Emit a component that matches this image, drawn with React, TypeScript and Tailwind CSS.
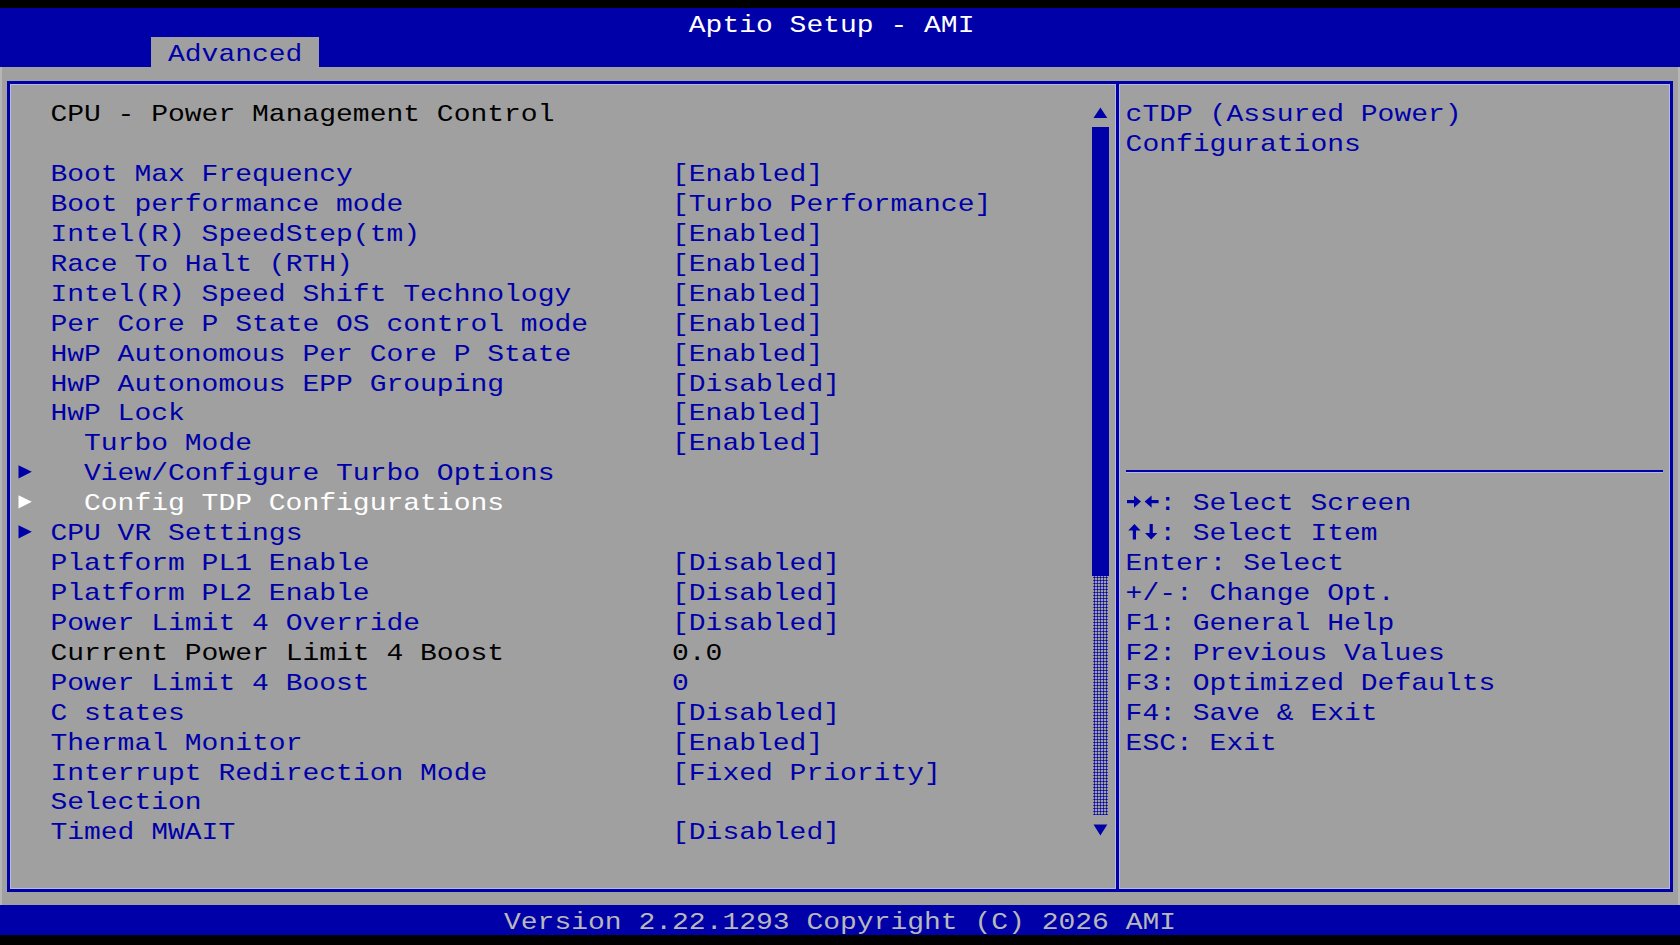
import React from "react";

type Item = {
  label: string;
  value?: string;
  arrow?: boolean;
  indent?: boolean;
  tone?: "blue" | "black" | "white";
};

const items: Item[] = [
  { label: "Boot Max Frequency", value: "[Enabled]" },
  { label: "Boot performance mode", value: "[Turbo Performance]" },
  { label: "Intel(R) SpeedStep(tm)", value: "[Enabled]" },
  { label: "Race To Halt (RTH)", value: "[Enabled]" },
  { label: "Intel(R) Speed Shift Technology", value: "[Enabled]" },
  { label: "Per Core P State OS control mode", value: "[Enabled]" },
  { label: "HwP Autonomous Per Core P State", value: "[Enabled]" },
  { label: "HwP Autonomous EPP Grouping", value: "[Disabled]" },
  { label: "HwP Lock", value: "[Enabled]" },
  { label: "Turbo Mode", value: "[Enabled]", indent: true },
  { label: "View/Configure Turbo Options", arrow: true, indent: true },
  { label: "Config TDP Configurations", arrow: true, indent: true, tone: "white" },
  { label: "CPU VR Settings", arrow: true },
  { label: "Platform PL1 Enable", value: "[Disabled]" },
  { label: "Platform PL2 Enable", value: "[Disabled]" },
  { label: "Power Limit 4 Override", value: "[Disabled]" },
  { label: "Current Power Limit 4 Boost", value: "0.0", tone: "black" },
  { label: "Power Limit 4 Boost", value: "0" },
  { label: "C states", value: "[Disabled]" },
  { label: "Thermal Monitor", value: "[Enabled]" },
  { label: "Interrupt Redirection Mode", value: "[Fixed Priority]" },
  { label: "Selection" },
  { label: "Timed MWAIT", value: "[Disabled]" },
];

const help: { key: string; text: string; icon?: "lr" | "ud" }[] = [
  { key: "→←", text: ": Select Screen", icon: "lr" },
  { key: "↑↓", text: ": Select Item", icon: "ud" },
  { key: "Enter", text: ": Select" },
  { key: "+/-", text: ": Change Opt." },
  { key: "F1", text: ": General Help" },
  { key: "F2", text: ": Previous Values" },
  { key: "F3", text: ": Optimized Defaults" },
  { key: "F4", text: ": Save & Exit" },
  { key: "ESC", text: ": Exit" },
];

// vertical squash so the glyphs get the wide, low BIOS proportions
const TX = "scale-y-[0.85] translate-y-[3px]";

function toneClass(t?: Item["tone"]) {
  if (t === "white") return "text-white";
  if (t === "black") return "text-black";
  return "text-[#0000a8]";
}

function RightArrow({ white }: { white?: boolean }) {
  return (
    <svg width="16.8" height="29.925" viewBox="0 0 16.8 29.925" className="block">
      <polygon points="1.5,9.2 14.8,15.8 1.5,22.4" fill={white ? "#ffffff" : "#0000a8"} />
    </svg>
  );
}

function KeyArrows({ kind }: { kind: "lr" | "ud" }) {
  return (
    <svg width="33.6" height="29.925" viewBox="0 0 33.6 29.925" className="block shrink-0">
      <title>{kind === "lr" ? "→←" : "↑↓"}</title>
      {kind === "lr" ? (
        <g fill="#0000a8">
          <rect x="1" y="14" width="8" height="3.2" />
          <polygon points="8,9.5 15,15.6 8,21.7" />
          <rect x="24.6" y="14" width="8" height="3.2" />
          <polygon points="25.6,9.5 18.6,15.6 25.6,21.7" />
        </g>
      ) : (
        <g fill="#0000a8">
          <polygon points="2.2,14.5 8.4,8 14.6,14.5" />
          <rect x="6.8" y="13.5" width="3.2" height="10" />
          <rect x="23.6" y="8" width="3.2" height="10" />
          <polygon points="19,17 25.2,23.5 31.4,17" />
        </g>
      )}
    </svg>
  );
}

function Row({ item }: { item: Item }) {
  const tone = toneClass(item.tone);
  return (
    <div className="flex h-[29.925px] leading-[29.925px] whitespace-pre">
      <div className="w-[40.5px] pl-[6.9px] shrink-0">
        {item.arrow ? <RightArrow white={item.tone === "white"} /> : null}
      </div>
      <div className={`w-[621.6px] shrink-0 ${item.indent ? "pl-[33.6px]" : ""} ${tone} ${TX}`}>{item.label}</div>
      <div className={`${item.tone === "black" ? "text-black" : "text-[#0000a8]"} ${TX}`}>{item.value ?? ""}</div>
    </div>
  );
}

export default function App() {
  return (
    <div className="w-[1680px] h-[945px] bg-black pt-[7.5px] overflow-hidden font-['Liberation_Mono',monospace] text-[28px] tracking-[0px]">
      {/* Header */}
      <div className="h-[59.85px] bg-[#0000a8] flex flex-col">
        <div className={`h-[29.925px] leading-[29.925px] text-white whitespace-pre pl-[688.8px] ${TX}`}>Aptio Setup - AMI</div>
        <div className="h-[29.925px] flex">
          <div className="ml-[151.2px] w-[168px] bg-[#a0a0a0] leading-[29.925px] pl-[16.8px] whitespace-pre">
            <div className={`text-[#0000a8] ${TX}`}>Advanced</div>
          </div>
        </div>
      </div>

      {/* Body */}
      <div className="h-[837.9px] bg-[#a0a0a0] px-[6.9px] py-[13.5px] flex border-x-2 border-[#b6b6b6]">
        <div className="flex-1 flex border-[3px] border-[#0000a8] shadow-[inset_0_0_0_1px_#b8b8e8] -mx-[2px]">
          {/* Left panel */}
          <div className="w-[1105.8px] shrink-0 flex pt-[13.4px]">
            <div className="w-[1082.1px] shrink-0 flex flex-col">
              <div className={`h-[29.925px] leading-[29.925px] pl-[40.5px] text-black whitespace-pre ${TX}`}>
                CPU - Power Management Control
              </div>
              <div className="h-[29.925px]" />
              {items.map((it, i) => (
                <Row key={i} item={it} />
              ))}
            </div>
            {/* Scrollbar */}
            <div className="w-[16.8px] shrink-0 flex flex-col">
              <svg width="16.8" height="29.925" viewBox="0 0 16.8 29.925" className="block">
                <polygon points="1.5,21 8.4,10.5 15.3,21" fill="#0000a8" />
              </svg>
              <div className="h-[448.9px] bg-[#0000a8]" />
              <div className="h-[239.4px] mx-[1px] bg-[radial-gradient(circle,#0000a8_0.9px,transparent_1.2px)] bg-[length:3px_3px]" />
              <svg width="16.8" height="29.925" viewBox="0 0 16.8 29.925" className="block">
                <polygon points="1.5,9.5 15.3,9.5 8.4,20.5" fill="#0000a8" />
              </svg>
            </div>
          </div>

          {/* Divider */}
          <div className="w-[3px] shrink-0 bg-[#0000a8] shadow-[1px_0_0_#b8b8e8,-1px_0_0_#b8b8e8]" />

          {/* Right panel */}
          <div className="flex-1 flex flex-col pt-[13.4px] pl-[6.9px] text-[#0000a8] whitespace-pre">
            <div className={`h-[29.925px] leading-[29.925px] ${TX}`}>cTDP (Assured Power)</div>
            <div className={`h-[29.925px] leading-[29.925px] ${TX}`}>Configurations</div>
            <div className="h-[299.25px]" />
            <div className="h-[29.925px] flex items-center pr-[7px]">
              <div className="h-[2px] w-full bg-[#0000a8] shadow-[0_1px_0_#b8b8e8]" />
            </div>
            {help.map((h, i) =>
              h.icon ? (
                <div key={i} className="h-[29.925px] leading-[29.925px] flex">
                  <KeyArrows kind={h.icon} />
                  <span className={TX}>{h.text}</span>
                </div>
              ) : (
                <div key={i} className={`h-[29.925px] leading-[29.925px] ${TX}`}>
                  {h.key}
                  {h.text}
                </div>
              )
            )}
          </div>
        </div>
      </div>

      {/* Footer */}
      <div className="h-[29.925px] bg-[#0000a8] leading-[29.925px] text-[#b8b8b8] whitespace-pre pl-[504px]">
        <div className={TX}>Version 2.22.1293 Copyright (C) 2026 AMI</div>
      </div>
    </div>
  );
}
